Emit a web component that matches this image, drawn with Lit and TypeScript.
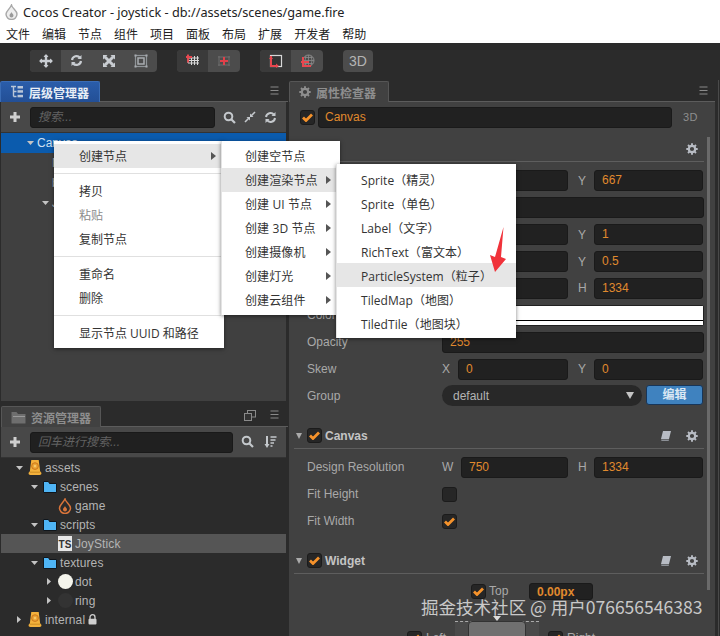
import { LitElement, html, css, svg } from "lit";
import { customElement } from "lit/decorators.js";

const check = html`<span class="check"><svg width="11" height="9" viewBox="0 0 11 9"><path d="M1 4.500l3 3 6-6" fill="none" stroke="#f5922b" stroke-width="2.800"/></svg></span>`;
const emptyCheck = html`<span class="check"></span>`;
const gear = (c = "#b8bcc4") => html`<svg width="12" height="12" viewBox="0 0 12 12"><circle cx="6" cy="6" r="3.200" fill="none" stroke="${c}" stroke-width="2.200"/><path d="M6 .3v2.400M6 9.300v2.400M.3 6h2.400M9.300 6h2.400M2 2l1.600 1.600M8.400 8.400L10 10M10 2L8.400 3.600M3.600 8.400L2 10" stroke="${c}" stroke-width="1.900"/></svg>`;
const book = html`<svg width="12" height="12" viewBox="0 0 12 12"><path d="M3 1h8L9 9H1z" fill="#b8bcc4"/><path d="M1 9.500h8l-.3 1.500H1.500z" fill="#8c9096"/></svg>`;
const burger = html`<svg class="burger" width="11" height="9" viewBox="0 0 11 9"><path d="M1.500 1h8M1.500 4.500h8M1.500 8h8" stroke="#8a8a8a" stroke-width="1"/></svg>`;
const plus = html`<svg width="12" height="12" viewBox="0 0 12 12"><path d="M6 1v10M1 6h10" stroke="#cfcfcf" stroke-width="3"/></svg>`;
const searchIcon = html`<svg width="13" height="13" viewBox="0 0 13 13"><circle cx="5.500" cy="5.500" r="3.800" fill="none" stroke="#c4c8cc" stroke-width="2"/><path d="M8.500 8.500l3.500 3.500" stroke="#c4c8cc" stroke-width="2.200"/></svg>`;
const refresh = (c = "#c4c8cc") => html`<svg width="13" height="13" viewBox="0 0 13 13"><path d="M2 6a4.500 4.500 0 0 1 8-2.200M11 7a4.500 4.500 0 0 1-8 2.200" fill="none" stroke="${c}" stroke-width="2"/><path d="M11.500 1v4h-4zM1.500 12V8h4z" fill="${c}"/></svg>`;
const collapse = html`<svg width="12" height="12" viewBox="0 0 12 12"><path d="M1 11l4-4M11 1L7 5" stroke="#c4c8cc" stroke-width="1.600"/><path d="M2.500 6H6v3.500zM9.500 6H6V2.500z" fill="#c4c8cc"/></svg>`;
const sortIcon = html`<svg width="13" height="14" viewBox="0 0 13 14"><path d="M3 1v9" stroke="#c4c8cc" stroke-width="2"/><path d="M.5 9h5L3 13z" fill="#c4c8cc"/><path d="M6.500 2h6M6.500 5h5M6.500 8h3.500M6.500 11h2" stroke="#c4c8cc" stroke-width="1.600"/></svg>`;
const popout = html`<svg width="12" height="11" viewBox="0 0 12 11"><rect x="3.500" y=".5" width="8" height="6.500" fill="none" stroke="#8a8a8a"/><rect x=".5" y="3.500" width="7" height="7" fill="#333" stroke="#8a8a8a"/></svg>`;
const treeIcon = html`<svg width="14" height="14" viewBox="0 0 14 14"><path d="M1 1.500h5M3.500 1.500v10M3.500 6.500h3M3.500 11.500h3" stroke="#b9c6d8" stroke-width="1.400" fill="none"/><rect x="7.500" y="1" width="5.500" height="2.500" fill="#b9c6d8"/><rect x="7.500" y="5.200" width="5.500" height="2.500" fill="#b9c6d8"/><rect x="7.500" y="9.800" width="5.500" height="2.500" fill="#b9c6d8"/></svg>`;
const folderTab = html`<svg width="15" height="13" viewBox="0 0 15 13"><path d="M.5 1h5l1.500 2h7.500v9.500H.5z" fill="#6e6e6e"/><path d="M2 5h12v1H2z" fill="#9a9a9a"/></svg>`;
const db = html`<svg width="14" height="17" viewBox="0 0 15 17"><path d="M3.500 0.500h8l1.500 12 1.500 2q0 2-2 2h-10q-2 0-2-2l1.500-2z" fill="#f3b13c"/><rect x="2" y="13" width="11" height="1" fill="#c98a20"/><circle cx="7.500" cy="7" r="3.600" fill="#e9a030" stroke="#c8741c"/><circle cx="7.500" cy="7" r="1.400" fill="#f7c766"/></svg>`;
const folder = html`<svg width="14" height="12" viewBox="0 0 14 12"><path d="M.5 11.500V.5h5l1 2h7v9z" fill="#4fb5f5" stroke="#10161c"/></svg>`;
const flame = html`<svg width="14" height="16" viewBox="0 0 14 16"><path d="M7 1c.5 3 5.500 5.500 5.500 9a5.500 5.500 0 0 1-11 0C1.500 7 5 5 7 1z" fill="none" stroke="#d9743a" stroke-width="1.500"/><path d="M7 8c.3 1.500 2 2 2 3.500a2 2 0 0 1-4 0C5 10 6.500 9.500 7 8z" fill="#d9743a"/></svg>`;
const lock = html`<svg width="9" height="11" viewBox="0 0 9 11"><path d="M2 5V3.200a2.500 2.500 0 0 1 5 0V5" fill="none" stroke="#cfcfcf" stroke-width="1.300"/><rect x=".5" y="4.800" width="8" height="5.700" rx="1" fill="#cfcfcf"/></svg>`;

const moveIcon = svg`<path d="M7 1v12M1 7h12" stroke="#c9cdd2" stroke-width="2.400"/><path d="M7 0l2.500 3h-5zM7 14l2.500-3h-5zM0 7l3-2.500v5zM14 7l-3-2.500v5z" fill="#c9cdd2"/>`;
const rotateIcon = svg`<path d="M2 6a4.500 4.500 0 0 1 8-2.200M11 7a4.500 4.500 0 0 1-8 2.200" fill="none" stroke="#c9cdd2" stroke-width="2.200"/><path d="M11.500 1v4h-4zM1.500 12V8h4z" fill="#c9cdd2"/>`;
const scaleIcon = svg`<path d="M3 3l8 8M11 3l-8 8" stroke="#c9cdd2" stroke-width="3"/><path d="M1 1h4.500L1 5.500zM13 1v4.500L8.500 1zM1 13V8.500L5.500 13zM13 13H8.500L13 8.500z" fill="#c9cdd2"/>`;
const rectIcon = svg`<rect x="1.500" y="1.500" width="11" height="11" fill="none" stroke="#8f9498" stroke-width="1.200"/><rect x="4" y="4" width="6" height="6" fill="none" stroke="#a8acb0" stroke-width="1.500"/><path d="M.5 .5h2v2h-2zM11.500 .5h2v2h-2zM.5 11.500h2v2h-2zM11.500 11.500h2v2h-2z" fill="#a8acb0"/>`;
const pivotIcon = svg`<path d="M3 1v8h11M3 4h11M3 6.500h11M6.500 2v9M9.500 2v9M12.500 2v9" stroke="#d8d8d8" stroke-width="1" fill="none"/><path d="M1 3h6M3 .5v8" stroke="#e8474f" stroke-width="1.800"/>`;
const centerIcon = svg`<path d="M2 3h12M2 11h12M3 2v10M13 2v10" stroke="#6d6d6d" stroke-width="1"/><path d="M4 7h8M8 3v8" stroke="#e0404a" stroke-width="2"/>`;
const localIcon = svg`<rect x="2.500" y="1.500" width="11" height="11" fill="#333" stroke="#d8d8d8" stroke-width="1.200"/><path d="M3 2v10h6" fill="none" stroke="#e8474f" stroke-width="2"/><path d="M8 9.500l3 2.500-3 2zM1 5l2-3 2 3z" fill="#e8474f"/>`;
const globalIcon = svg`<circle cx="8.500" cy="6.500" r="5.500" fill="none" stroke="#8b8b8b"/><path d="M8.500 1v11M3 6.500h11M4.500 3.500h8M4.500 9.500h8M6 1.800q-2 4.700 0 9.500M11 1.800q2 4.700 0 9.500" stroke="#8b8b8b" stroke-width=".8" fill="none"/><path d="M3 3v9h8" fill="none" stroke="#e8474f" stroke-width="2"/><path d="M1 8h8" stroke="#e8474f" stroke-width="2"/>`;

const tool = (icon: unknown, w = 14, on = false) =>
  html`<span class="tool ${on ? "on" : ""}"><svg width="${w}" height="14" viewBox="0 0 ${w} 14">${icon}</svg></span>`;

interface TreeRow {
  depth: number;
  label: string;
  open?: boolean;
  closed?: boolean;
  icon?: unknown;
  sel?: boolean;
  after?: unknown;
}

const nodes: TreeRow[] = [
  { depth: 0, label: "Canvas", open: true, sel: true },
  { depth: 1, label: "Main Camera" },
  { depth: 1, label: "bg" },
  { depth: 1, label: "Joystick", open: true },
  { depth: 2, label: "ring" },
  { depth: 2, label: "dot" },
];

const assets: TreeRow[] = [
  { depth: 0, label: "assets", open: true, icon: db },
  { depth: 1, label: "scenes", open: true, icon: folder },
  { depth: 2, label: "game", icon: flame },
  { depth: 1, label: "scripts", open: true, icon: folder },
  { depth: 2, label: "JoyStick", sel: true, icon: html`<span class="ts">TS</span>` },
  { depth: 1, label: "textures", open: true, icon: folder },
  { depth: 2, label: "dot", closed: true, icon: html`<span class="dot"></span>` },
  { depth: 2, label: "ring", closed: true, icon: html`<span class="dot dark"></span>` },
  { depth: 0, label: "internal", closed: true, icon: db, after: lock },
];

const watermark = "掘金技术社区 @ 用户076656546383";

@customElement("app-root")
export class AppRoot extends LitElement {
  static styles = css`
    :host {
      display: block;
      position: relative;
      width: 720px;
      height: 636px;
      overflow: hidden;
      background: #2b2b2b;
      font: 12px "Liberation Sans", "Noto Sans CJK SC", sans-serif;
      color: #a9a9a9;
    }
    svg { display: block; flex: none; }
    .title {
      height: 24px;
      background: #fff;
      display: flex;
      align-items: center;
      gap: 4px;
      padding-left: 4px;
      color: #222;
      font: 12.700px "Noto Sans", "Noto Sans CJK SC", sans-serif;
    }
    .menubar {
      height: 19px;
      background: #fff;
      display: flex;
      align-items: center;
      gap: 12px;
      padding-left: 6px;
      color: #222;
      font: 12px "Noto Sans CJK SC", sans-serif;
    }
    .toolbar {
      height: 37px;
      box-sizing: border-box;
      padding: 7px 0 0 30px;
      display: flex;
      align-items: flex-start;
      gap: 20px;
    }
    .tools { display: flex; height: 22px; border-radius: 4px; overflow: hidden; background: #4c4c4c; }
    .tool { width: 32px; display: flex; align-items: center; justify-content: center; }
    .tool.on { background: #3a3a3a; width: 31px; }
    .btn3d {
      width: 30px; height: 22px; line-height: 22px; text-align: center;
      background: #4c4c4c; border-radius: 4px; color: #b4b4b4; font-size: 14px;
    }
    .main { display: flex; height: 556px; }
    .left { width: 287px; margin-left: 1px; flex: none; display: flex; flex-direction: column; }
    .right { width: 426px; margin-left: 1px; flex: none; display: flex; flex-direction: column; position: relative; }
    .strip { flex: 1; border-right: 1px solid #4a4a4a; margin-right: 1px; margin-left: 3px; }
    .tabs {
      height: 21px; flex: none; display: flex; align-items: flex-end;
      justify-content: space-between; border-bottom: 1px solid #5c5c5c; box-sizing: content-box;
    }
    .tab {
      width: 100px; height: 21px; box-sizing: border-box; display: flex; align-items: center; gap: 5px;
      padding-left: 9px; font-weight: bold; color: #8e8e8e; background: #414141;
      border: 1px solid #565656; border-bottom: none; border-radius: 2px 2px 0 0;
      margin-bottom: -1px;
    }
    .tab.active { background: linear-gradient(#2a5daa, #234f96); color: #e8eef6; border-color: #3a6cb5; margin-left: -1px; }
    .tab-actions { display: flex; gap: 13px; align-self: center; padding-right: 6px; }
    .left .tab-actions { padding-right: 8px; }
    .panel { background: #404040; height: 299px; margin-right: 2px; }
    .search {
      height: 31px; background: #484848; display: flex; align-items: center;
      padding: 0 9px 0 8px; gap: 8px; border-bottom: 1px solid #333;
      box-sizing: border-box;
    }
    .search .plus { width: 13px; margin-right: 0; }
    .search input {
      all: unset; box-sizing: border-box; flex: 1; height: 21px; min-width: 0;
      background: #202020; border: 1px solid #191919; border-radius: 3px;
      padding-left: 7px; font: italic 12px "Liberation Sans", "Noto Sans CJK SC", sans-serif; color: #666;
    }
    .search input::placeholder { color: #626262; }
    .search .ico { display: flex; gap: 8px; }
    .tree-row {
      height: 20px; display: flex; align-items: center; gap: 3px; color: #b4b4b4;
      box-sizing: border-box;
    }
    .tree-row.sel { background: #0b5bad; color: #cfe0f2; }
    .tri { width: 8px; flex: none; display: flex; justify-content: center; }
    .assets-panel { flex: 1; background: #2b2b2b; margin-right: 2px; display: flex; flex-direction: column; }
    .assets-tree .tree-row { height: 19px; letter-spacing: .1px; }
    .assets-tree .tree-row.sel { background: #555; color: #b4b4b4; }
    .assets-tree .tri { margin-right: 2px; }
    .asset-ico { width: 14px; height: 17px; display: flex; align-items: center; justify-content: center; flex: none; }
    .ts {
      width: 14px; height: 15px; flex: none; background: #e8e8e8; color: #333; font: bold 10px/17px "Liberation Sans", sans-serif;
      text-align: center; display: block; letter-spacing: 0;
    }
    .dot { width: 15px; height: 15px; flex: none; border-radius: 50%; background: #f4f4ec; display: block; }
    .dot.dark { background: #333; }
    .gap { height: 4px; flex: none; }
    .inspector { flex: 1; background: #414141; overflow: hidden; }
    .name-row { height: 35px; display: flex; align-items: flex-start; padding: 5px 0 0 11px; box-sizing: border-box; }
    .name-row .check { margin-top: 3px; }
    .name-row .input { width: 354px; height: 21px; margin-left: 3px; box-sizing: border-box; padding-left: 6px; }
    .name-row .tag { color: #8e8e8e; font-size: 11px; margin: 4px 0 0 11px; letter-spacing: .4px; }
    .check {
      width: 15px; height: 15px; box-sizing: border-box; background: #262626; border: 1px solid #1b1b1b;
      border-radius: 3px; display: flex; align-items: center; justify-content: center; flex: none;
    }
    .head {
      height: 25px; box-sizing: border-box; display: flex; align-items: center; gap: 3px;
      margin: 0 11px 0 5px; padding-left: 2px; border-bottom: 1px solid #5e5e5e; color: #c4c4c4; font-weight: bold;
    }
    .head .actions { margin-left: auto; display: flex; gap: 14px; padding-right: 6px; }
    .head .t { width: 0; height: 0; border-left: 3.500px solid transparent; border-right: 3.500px solid transparent; border-top: 6px solid #aaa; margin-right: 2px; }
    .head .plain { margin-left: 2px; }
    .row {
      height: 26.875px; display: grid; grid-template-columns: 135px 1fr; align-items: center;
      padding: 0 11px 0 18px;
    }
    .rows-first { margin-top: 5.500px; }
    .input {
      height: 21px; background: #212121; border: 1px solid #1a1a1a; border-radius: 3px; box-sizing: border-box;
      color: #e08a2e; padding-left: 7px; line-height: 19px; display: block;
    }
    .pair { display: grid; grid-template-columns: 126px 125px; gap: 10px; }
    .field { display: grid; grid-template-columns: 16px 1fr; align-items: center; }
    .field.wide { grid-template-columns: 19px 1fr; }
    .colorbox { height: 21px; background: #212121; border-radius: 3px; padding: 1px; box-sizing: border-box; }
    .colorbox span { display: block; height: 19px; background: linear-gradient(#fff 0 14px, #000 14px 15px, #fff 15px); }
    .select {
      height: 21px; width: 200px; background: #282828; border-radius: 11px; color: #b4b4b4;
      display: flex; align-items: center; justify-content: space-between; padding: 0 8px 0 11px; box-sizing: border-box;
    }
    .select i { width: 0; height: 0; border-left: 4.500px solid transparent; border-right: 4.500px solid transparent; border-top: 7px solid #c4c4c4; }
    .group { display: flex; gap: 4px; }
    .edit {
      width: 57px; height: 20px; background: #3f82bf; border: 1px solid #17365a; border-radius: 3px;
      box-sizing: border-box; color: #dbe8f4; text-align: center; font-weight: bold; line-height: 18px;
    }
    .widget { display: flex; flex-direction: column; align-items: flex-start; margin-top: 9px; }
    .top-row { display: flex; align-items: center; gap: 3px; height: 17px; margin-left: 182px; }
    .top-row .lbl { width: 37px; }
    .top-row .input { width: 64px; height: 17px; line-height: 16px; font-weight: bold; }
    .pad { display: flex; align-items: flex-start; margin: 21px 0 0 118px; }
    .side { display: flex; align-items: center; gap: 4px; margin-top: 10px; width: 48px; }
    .side.r { margin-left: 9px; }
    .box { width: 84px; height: 30px; background: #4a4a4a; position: relative; flex: none; }
    .box::before {
      content: ""; position: absolute; left: 0; right: 0; top: 0; height: 0; border-top: 1px dashed #aaa;
    }
    .box b { position: absolute; left: 13px; top: 0; width: 58px; height: 30px; background: #707070; border-radius: 4px 4px 0 0; border: 1px solid #333; box-sizing: border-box; }
    .box u { position: absolute; left: 38px; top: -5px; width: 0; height: 0; border-left: 4px solid transparent; border-right: 4px solid transparent; border-top: 5px solid #ddd; }
    .scroll { position: absolute; left: 418px; top: 57px; width: 3px; height: 453px; background: #6a6a6a; }
    .menu {
      position: absolute; background: #fff; padding: 3px 0; color: #333; box-sizing: border-box;
      box-shadow: 0 1px 4px rgba(0, 0, 0, .5); font: 12px "Open Sans", "Noto Sans CJK SC", sans-serif;
    }
    .m1 { left: 54px; top: 141px; width: 170px; z-index: 1; }
    .m2 { left: 221px; top: 141px; width: 119px; z-index: 2; border-left: 1px solid #e4e4e4; }
    .m3 { left: 336px; top: 164px; width: 180px; z-index: 3; border-left: 1px solid #e4e4e4; }
    .item { height: 24px; display: flex; align-items: center; padding-left: 25px; position: relative; white-space: nowrap; box-sizing: border-box; }
    .m2 .item { padding-left: 23px; letter-spacing: .1px; }
    .m3 .item { padding: 2px 0 0 24px; letter-spacing: .05px; }
    .item.hi { background: #e6e6e6; }
    .item.off { color: #8c8c8c; }
    .item .arr { position: absolute; top: 8px; width: 0; height: 0; border-top: 4px solid transparent; border-bottom: 4px solid transparent; border-left: 5px solid #555; }
    .m1 .arr { left: 157px; }
    .m2 .arr { left: 104px; }
    .sep { height: 1px; background: #e0e0e0; margin: 5px 0; }
    .m1 .sep { margin-right: 3px; }
    .arrow { position: absolute; left: 488px; top: 226px; z-index: 4; }
    .mark {
      position: absolute; left: 421px; top: 594px; z-index: 5; white-space: nowrap;
      color: rgba(255, 255, 255, .72); font: 17.550px "Noto Sans CJK SC", sans-serif;
    }
  `;

  treeRow(r: TreeRow, base: number, step: number) {
    return html`<div class="tree-row ${r.sel ? "sel" : ""}" style="padding-left:${base + r.depth * step}px">
      <span class="tri">${r.open
        ? html`<svg width="7" height="4" viewBox="0 0 7 4"><path d="M0 0h7L3.500 4z" fill="#c4c4c4"/></svg>`
        : r.closed
          ? html`<svg width="4" height="7" viewBox="0 0 4 7"><path d="M0 0v7l4-3.500z" fill="#c4c4c4"/></svg>`
          : ""}</span>
      ${r.icon ? html`<span class="asset-ico">${r.icon}</span>` : ""}
      <span>${r.label}</span>
      ${r.after ?? ""}
    </div>`;
  }

  numPair(a: string, av: string, b: string, bv: string, wide = false) {
    return html`<div class="pair">
      <div class="field ${wide ? "wide" : ""}"><span>${a}</span><span class="input">${av}</span></div>
      <div class="field"><span>${b}</span><span class="input">${bv}</span></div>
    </div>`;
  }

  render() {
    return html`
      <div class="title">
        <svg width="15" height="16" viewBox="0 0 15 16"><path d="M7.500 1c.6 3.500 5.500 5.500 5.500 9a5.500 5.500 0 0 1-11 0C2 7 6 5 7.500 1z" fill="#eee" stroke="#a8a8a8" stroke-width="1.400"/><path d="M7.500 8c.3 1.500 2 2 2 3.500a2 2 0 0 1-4 0C5.500 10 7 9.500 7.500 8z" fill="#9a9a9a"/></svg>
        <span>Cocos Creator - joystick - db://assets/scenes/game.fire</span>
      </div>
      <div class="menubar">
        ${["文件", "编辑", "节点", "组件", "项目", "面板", "布局", "扩展", "开发者", "帮助"].map((m) => html`<span>${m}</span>`)}
      </div>
      <div class="toolbar">
        <div class="tools">${tool(moveIcon, 14, true)}${tool(rotateIcon)}${tool(scaleIcon)}${tool(rectIcon)}</div>
        <div class="tools">${tool(pivotIcon, 15, true)}${tool(centerIcon, 16)}</div>
        <div class="tools">${tool(localIcon, 15, true)}${tool(globalIcon, 15)}</div>
        <div class="btn3d">3D</div>
      </div>
      <div class="main">
        <div class="left">
          <div class="tabs">
            <div class="tab active">${treeIcon}<span>层级管理器</span></div>
            <div class="tab-actions">${burger}</div>
          </div>
          <div class="panel">
            <div class="search">
              <span class="plus">${plus}</span>
              <input placeholder="搜索..." />
              <span class="ico">${searchIcon}${collapse}${refresh()}</span>
            </div>
            ${nodes.map((r) => this.treeRow(r, 25, 15))}
          </div>
          <div class="gap"></div>
          <div class="tabs">
            <div class="tab">${folderTab}<span>资源管理器</span></div>
            <div class="tab-actions">${popout}${burger}</div>
          </div>
          <div class="assets-panel">
            <div class="search">
              <span class="plus">${plus}</span>
              <input placeholder="回车进行搜索..." />
              <span class="ico" style="gap:10px">${searchIcon}${sortIcon}</span>
            </div>
            <div class="assets-tree">${assets.map((r) => this.treeRow(r, 14, 15))}</div>
          </div>
        </div>
        <div class="right">
          <div class="tabs">
            <div class="tab">${gear("#8e8e8e")}<span>属性检查器</span></div>
            <div class="tab-actions">${burger}</div>
          </div>
          <div class="inspector">
            <div class="name-row">${check}<span class="input">Canvas</span><span class="tag">3D</span></div>
            <div class="head"><span class="t"></span><span class="plain">Node</span><span class="actions">${gear()}</span></div>
            <div class="rows-first">
              <div class="row"><span>Position</span>${this.numPair("X", "375", "Y", "667")}</div>
              <div class="row"><span>Rotation</span><span class="input">0</span></div>
              <div class="row"><span>Scale</span>${this.numPair("X", "1", "Y", "1")}</div>
              <div class="row"><span>Anchor</span>${this.numPair("X", "0.5", "Y", "0.5")}</div>
              <div class="row"><span>Size</span>${this.numPair("W", "750", "H", "1334", true)}</div>
              <div class="row"><span>Color</span><span class="colorbox"><span></span></span></div>
              <div class="row"><span>Opacity</span><span class="input">255</span></div>
              <div class="row"><span>Skew</span>${this.numPair("X", "0", "Y", "0")}</div>
              <div class="row"><span>Group</span><div class="group"><div class="select"><span>default</span><i></i></div><div class="edit">编辑</div></div></div>
            </div>
            <div class="head" style="margin-top:14.500px"><span class="t"></span>${check}<span>Canvas</span><span class="actions">${book}${gear()}</span></div>
            <div style="margin-top:5px">
              <div class="row"><span>Design Resolution</span>${this.numPair("W", "750", "H", "1334", true)}</div>
              <div class="row"><span>Fit Height</span>${emptyCheck}</div>
              <div class="row"><span>Fit Width</span>${check}</div>
            </div>
            <div class="head" style="margin-top:14px"><span class="t"></span>${check}<span>Widget</span><span class="actions">${book}${gear()}</span></div>
            <div class="widget">
              <div class="top-row">${check}<span class="lbl">Top</span><span class="input">0.00px</span></div>
              <div class="pad">
                <div class="side">${check}<span>Left</span></div>
                <div class="box"><b></b><u></u></div>
                <div class="side r">${check}<span>Right</span></div>
              </div>
            </div>
          </div>
          <div class="scroll"></div>
        </div>
        <div class="strip"></div>
      </div>

      <div class="menu m1">
        <div class="item hi">创建节点<span class="arr"></span></div>
        <div class="sep"></div>
        <div class="item">拷贝</div>
        <div class="item off">粘贴</div>
        <div class="item">复制节点</div>
        <div class="sep"></div>
        <div class="item">重命名</div>
        <div class="item">删除</div>
        <div class="sep"></div>
        <div class="item">显示节点 UUID 和路径</div>
      </div>
      <div class="menu m2">
        <div class="item">创建空节点</div>
        <div class="item hi">创建渲染节点<span class="arr"></span></div>
        <div class="item">创建 UI 节点<span class="arr"></span></div>
        <div class="item">创建 3D 节点<span class="arr"></span></div>
        <div class="item">创建摄像机<span class="arr"></span></div>
        <div class="item">创建灯光<span class="arr"></span></div>
        <div class="item">创建云组件<span class="arr"></span></div>
      </div>
      <div class="menu m3">
        <div class="item">Sprite（精灵）</div>
        <div class="item">Sprite（单色）</div>
        <div class="item">Label（文字）</div>
        <div class="item">RichText（富文本）</div>
        <div class="item hi">ParticleSystem（粒子）</div>
        <div class="item">TiledMap（地图）</div>
        <div class="item">TiledTile（地图块）</div>
      </div>
      <svg class="arrow" width="20" height="48" viewBox="0 0 20 48"><path d="M15.500 1L13 31l5 2L7 46 2 29l5 2z" fill="#f0323a"/></svg>
      <div class="mark">${watermark}</div>
    `;
  }
}
